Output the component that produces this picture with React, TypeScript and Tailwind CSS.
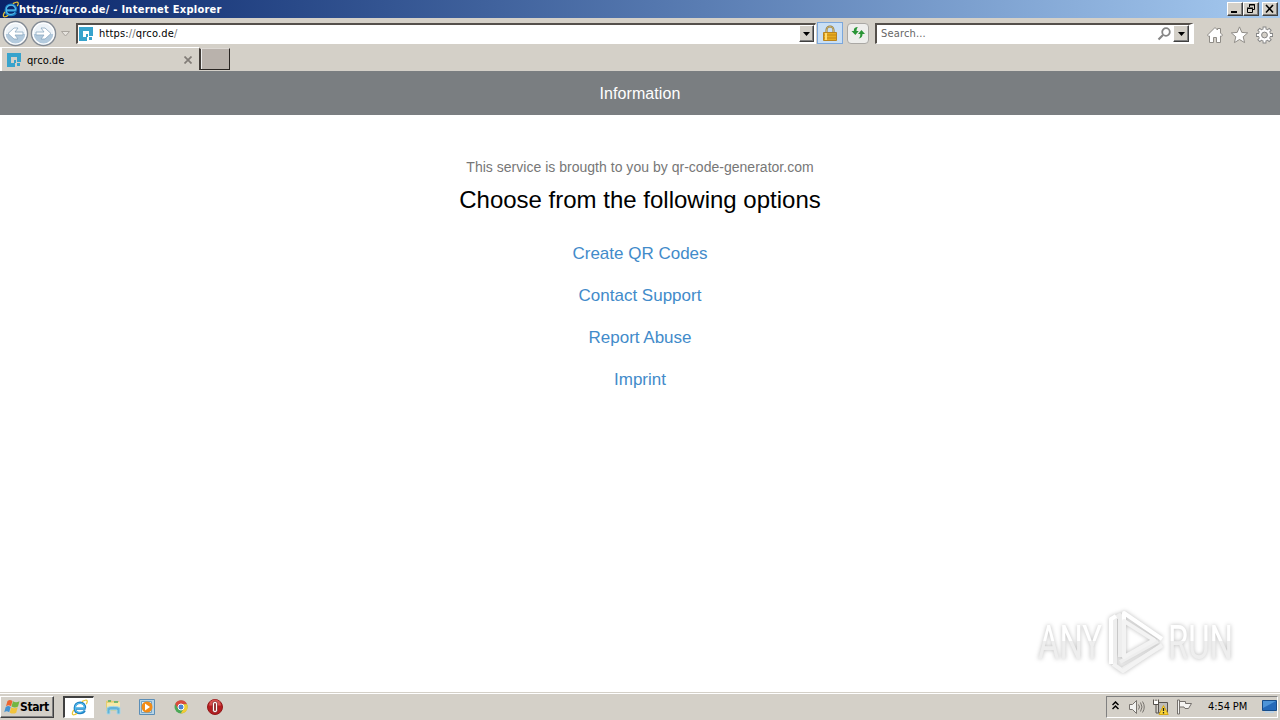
import React from 'react';

const links = ['Create QR Codes', 'Contact Support', 'Report Abuse', 'Imprint'];

const raised = 'border border-t-white border-l-white border-r-[#404040] border-b-[#404040] bg-[#d4d0c8] shadow-[inset_-1px_-1px_0_#808080]';

const IeLogo = ({ size }: { size: number }) => (
  <svg width={size} height={size} viewBox="0 0 18 18" fill="none" className="shrink-0">
    <path d="M5 10.200h10.500M14.600 12.200c-1 1.800-2.700 2.800-5 2.800C6.200 15 4 12.800 4 9.500S6.300 4 9.700 4s5.300 2.200 5.100 5.800" stroke="#1d7fc4" strokeWidth="2.500" />
    <path d="M5 9.600h9.500M13.800 12.200c-1 1.300-2.400 2-4.200 2C6.600 14.200 4.500 12.500 4.500 9.500S6.700 4.500 9.700 4.500s4.800 2 4.600 4.800" stroke="#55bdec" strokeWidth="1.200" />
    <path d="M3 11.500C1 14.500.8 17.200 3.200 16.700c1-.2 2.200-.9 3.200-1.700M11.500 2.800c2.700-1.600 5.200-2.100 5.600-.8.3 1-.2 2.200-1 3.400" stroke="#e8c535" strokeWidth="1.300" />
  </svg>
);

const SiteIcon = () => (
  <svg width="14" height="14" viewBox="0 0 14 14" className="shrink-0" fill="#38a3cc">
    <path d="M0 0h14v9h-4V4H4v6h4v4H0z" />
    <path d="M7 7h2v3H7zM10 10h3v3h-3z" />
  </svg>
);

const NavButton = ({ forward = false }: { forward?: boolean }) => (
  <svg width="27" height="27" viewBox="0 0 27 27" fill="none" className="shrink-0">
    <circle cx="13.5" cy="13.5" r="12" fill="#edf3f8" stroke="#858c95" strokeWidth="1.5" />
    <path d="M3 14a10.5 10.5 0 0 0 21 0z" fill="#b3cadd" />
    <circle cx="13.5" cy="13.5" r="10.5" stroke="#fff" strokeWidth="1.2" />
    <path
      d={forward ? 'M6 12h8l-3-4h4l6 5.5-6 5.5h-4l3-4H6z' : 'M21 12h-8l3-4h-4l-6 5.5 6 5.5h4l-3-4h8z'}
      fill="#fff"
      stroke="#8ba8c0"
      strokeWidth=".8"
    />
  </svg>
);

const DropButton = ({ width }: { width: number }) => (
  <div className={`flex h-[17px] shrink-0 items-center justify-center ${width > 15 ? 'w-4' : 'w-[15px]'} ${raised}`}>
    <svg width="7" height="4" viewBox="0 0 7 4"><path d="M0 0h7L3.5 4z" fill="#000" /></svg>
  </div>
);

const TitleBar = () => (
  <div className="flex h-[18px] items-center bg-linear-to-r from-[#0a246a] to-[#a6caf0] pl-0.5 pr-0.5">
    <IeLogo size={17} />
    <span className="whitespace-nowrap pt-px text-[11px] font-bold leading-[17px] tracking-[0.26px] text-white">
      https://qrco.de/ - Internet Explorer
    </span>
    <div className="ml-auto flex h-[14px]">
      <div className={`w-4 ${raised}`}>
        <svg width="14" height="12" viewBox="0 0 14 12"><path d="M3 8h6v2H3z" /></svg>
      </div>
      <div className={`w-4 ${raised}`}>
        <svg width="14" height="12" viewBox="0 0 14 12" fill="none" stroke="#000">
          <path d="M5.500 4V1.500h5v5H9M5 2h6M3.500 5.500h5v4h-5zM3 5h6" />
        </svg>
      </div>
      <div className={`ml-[3px] w-4 ${raised}`}>
        <svg width="14" height="12" viewBox="0 0 14 12" stroke="#000" strokeWidth="1.600"><path d="M3 2l7 7.500M10 2L3 9.500" /></svg>
      </div>
    </div>
  </div>
);

const Toolbar = () => (
  <div className="flex h-[29px] items-center bg-[#d4d0c8] pl-0.5 pt-px">
    <div className="flex h-[27px] w-[55px] items-center gap-px">
      <NavButton />
      <NavButton forward />
    </div>
    <svg className="ml-1 mt-0.5 shrink-0" width="9" height="6" viewBox="0 0 9 6"><path d="M.5.5h8l-4 4.500z" fill="#e6e3de" stroke="#aaa69f" /></svg>
    <div className="ml-[6px] flex h-[21px] w-[740px] items-center border-2 border-b border-r border-b-white border-l-[#55504b] border-r-white border-t-[#55504b] bg-white pl-px">
      <SiteIcon />
      <span className="ml-[6px] pt-0.5 text-[11px] tracking-[0.17px]">
        https:<span className="text-[#777]">//</span>qrco.de<span className="text-[#777]">/</span>
      </span>
      <div className="ml-auto mr-px"><DropButton width={15} /></div>
    </div>
    <div className="ml-px flex h-[22px] w-[26px] items-center justify-center border border-[#7ba7dc] bg-[#c9dff5]">
      <svg width="14" height="17" viewBox="0 0 14 17">
        <path d="M3.500 8V5a3.500 3.500 0 0 1 7 0v3" fill="none" stroke="#8b7440" strokeWidth="2" />
        <path d="M3.500 8V5a3.500 3.500 0 0 1 7 0v3" fill="none" stroke="#e0c875" strokeWidth=".8" />
        <path d="M.5 7.500h13v8H.5z" fill="#e8ad21" stroke="#b98420" />
        <path d="M1 10h12M1 13h12" stroke="#b5790e" strokeWidth=".7" />
        <path d="M3 8v7" stroke="#ffdc73" strokeWidth="2" />
      </svg>
    </div>
    <div className="ml-1 flex h-[21px] w-[22px] items-center justify-center rounded-sm border border-[#aaa8a4] bg-[#eeeeec]">
      <svg width="15" height="14" viewBox="0 0 15 14" fill="#299536">
        <path d="M7 1C4 1 2.800 2 2.800 5H.5l3.800 4 3.500-4H5.500C5.500 3 6 2 7 1zM7.500 12.500c3-.5 4-1.800 4-4.500H14l-3.500-4L7 8h2.300c0 2-.3 3.500-1.800 4.500z" />
      </svg>
    </div>
    <div className="ml-[6px] flex h-[21px] w-[319px] items-center border-2 border-b border-r-[5px] border-b-white border-l-[#55504b] border-r-white border-t-[#55504b] bg-white pl-1">
      <span className="pt-0.5 text-[11px] tracking-[0.16px] text-[#666]">Search...</span>
      <svg className="ml-auto mr-0.5" width="14" height="14" viewBox="0 0 14 14" fill="none" stroke="#858585" strokeWidth="1.800">
        <circle cx="9" cy="5" r="3.800" />
        <path d="M6 8l-4.500 4.500" strokeWidth="2.200" />
      </svg>
      <DropButton width={16} />
    </div>
    <div className="ml-3 flex gap-[7px] pt-[3px]">
      <svg width="18" height="18" viewBox="0 0 18 18" fill="#fff" stroke="#8f8c87" strokeWidth="1">
        <path d="M1.500 9L9 1.500l2.500 2.500V2.500h3V7l2 2-1.200 1.500L14.500 10v6.500h-4v-5h-3v5h-4V10l-.8.5z" />
      </svg>
      <svg width="18" height="18" viewBox="0 0 18 18" fill="#fff" stroke="#8f8c87" strokeWidth="1">
        <path d="M8.500.9l2.300 5.500 5.900.5-4.500 3.900 1.400 5.800-5.100-3.100-5.100 3.100 1.400-5.800L.3 6.900l5.900-.5z" />
      </svg>
      <svg width="18" height="18" viewBox="0 0 18 18" fill="none">
        <g stroke="#858585" strokeWidth="3.800">
          <path d="M8.500.5v17M0 9h17M2.500 3l12 12M14.500 3l-12 12" />
        </g>
        <circle cx="8.500" cy="9" r="6.500" fill="#858585" />
        <path d="M8.500 1.400v15.200M.9 9h15.200M3.200 3.700l10.600 10.600M13.800 3.700L3.200 14.300" stroke="#fff" strokeWidth="2" />
        <circle cx="8.500" cy="9" r="5.700" fill="#fff" />
        <circle cx="8.500" cy="9" r="2.900" fill="#d4d0c8" stroke="#858585" />
      </svg>
    </div>
  </div>
);

const Tabs = () => (
  <div className="flex h-6 bg-[#d4d0c8]">
    <div className="flex h-6 w-[199px] items-center border-l-2 border-t border-white pl-[5px] pt-px">
      <SiteIcon />
      <span className="ml-1.5 pt-0.5 text-[11px] tracking-[0.06px]">qrco.de</span>
      <svg className="ml-auto mr-[7px]" width="8" height="8" viewBox="0 0 8 8" stroke="#817c77" strokeWidth="1.700"><path d="M.5.5l7 7M7.500.5l-7 7" /></svg>
    </div>
    <div className="mt-px h-[22px] w-[31px] border-b border-l-2 border-r border-t border-b-[#292522] border-l-[#403b37] border-r-[#292522] border-t-[#ddd9d4] bg-[#b9b2ac] shadow-[inset_1px_0_0_#eee]" />
  </div>
);

const Page = () => (
  <div className="flex flex-1 flex-col items-center bg-white font-['Liberation_Sans',sans-serif]">
    <header className="flex h-11 w-full items-center justify-center bg-[#7a7e81] pt-0.5 text-[16px] text-white">
      <span className="tracking-[0.08px]">Information</span>
    </header>
    <p className="mt-[42px] text-[14px] leading-5 tracking-[0.02px] text-[#777]">This service is brougth to you by qr-code-generator.com</p>
    <h1 className="mt-2 text-[24px] leading-[30px] text-black">Choose from the following options</h1>
    <nav className="mt-[18px] flex flex-col items-center">
      {links.map((link) => (
        <a key={link} href="#" className="flex h-[42px] items-center text-[17px] text-[#428bca]">{link}</a>
      ))}
    </nav>
  </div>
);

const Watermark = () => (
  <svg className="absolute left-[1030px] top-[602px] overflow-visible drop-shadow-[0_0_2px_#bcbcbc]" width="220" height="76" viewBox="0 0 220 76">
    <defs>
      <linearGradient id="shine" gradientUnits="userSpaceOnUse" x1="0" y1="0" x2="0" y2="76">
        <stop offset=".51" stopColor="#fff" />
        <stop offset=".51" stopColor="#eee" />
      </linearGradient>
    </defs>
    <g fill="url(#shine)" fontFamily="Liberation Sans Narrow, Roboto, sans-serif" fontSize="49">
      <text x="8" y="57" textLength="64" lengthAdjust="spacingAndGlyphs">ANY</text>
      <text x="138" y="57" textLength="65" lengthAdjust="spacingAndGlyphs">RUN</text>
    </g>
    <g fill="none" strokeWidth="4" strokeLinejoin="round">
      <path d="M85 62V16l5-3v42M90 60l38-21M93 67l39-23" stroke="#eee" />
      <path d="M81 62V17l5-3" stroke="#fff" />
      <path d="M94 54V11l38 26" stroke="#fff" />
      <path d="M94 19l30 19-30 17zM83 62l10 7 39-26" stroke="#f3f3f3" />
    </g>
  </svg>
);

const Taskbar = () => (
  <div className="flex h-7 items-center border-t border-[#d4d0c8] bg-[#d4d0c8] pr-0.5 shadow-[inset_0_1px_0_#fff]">
    <button className={`flex h-[22px] w-[54px] items-center pl-[3px] ${raised}`}>
      <svg width="16" height="16" viewBox="0 0 16 16" className="shrink-0">
        <path d="M3.500 2c2-1.500 3-1.300 5 0L7 7.200c-2-1.200-3-1.200-5 0z" fill="#ed6530" />
        <path d="M9 2.300c2 1.200 4 1.200 6.500 0L14 7.600c-2 1.200-4 1.200-6.500 0z" fill="#73b642" />
        <path d="M1.700 7.900c2-1.200 3-1.200 5 0l-1.500 5.300c-2-1.200-3-1.200-5 0z" fill="#4393d3" />
        <path d="M7.200 8.300c2 1.200 4 1.200 6.500 0l-1.500 5.400c-2 1.200-4 1.200-6.500 0z" fill="#f2c43c" />
      </svg>
      <span className="text-[12px] font-bold leading-5 tracking-[-0.4px]">Start</span>
    </button>
    <div className="ml-[9px] flex h-[22px] w-[31px] items-center justify-center border border-l-2 border-t-2 border-b-white border-l-[#404040] border-r-white border-t-[#404040] bg-white">
      <IeLogo size={17} />
    </div>
    <svg className="ml-[11px]" width="17" height="17" viewBox="0 0 17 17">
      <path d="M1 3l5-1 1 1h7v10H1z" fill="#e4cd70" />
      <path d="M2 5l13-1v8H2z" fill="#f6e9a8" />
      <path d="M3 3h3M9 4h4" stroke="#4dad69" strokeWidth="1.500" />
      <path d="M2 9.500C5 8 12 8 15 9.500V16h-3v-4H5v4H2z" fill="#61b3d7" stroke="#a8d6e6" />
    </svg>
    <svg className="ml-[17px]" width="16" height="16" viewBox="0 0 16 16">
      <path d="M.5.5h15v15H.5z" fill="#b8d4e6" stroke="#5b8eb7" />
      <path d="M2.500 2.500h10v11h-10z" fill="#e2edf2" stroke="#73a3c5" />
      <circle cx="8" cy="8" r="5.500" fill="#f28b16" />
      <path d="M6 4.500l5 3.500-5 3.500z" fill="#fff" />
    </svg>
    <svg className="ml-[19px]" width="14" height="14" viewBox="0 0 14 14">
      <circle cx="7" cy="7" r="6.500" fill="#4ca857" />
      <path d="M1.200 4A6.500 6.500 0 0 1 13 4.200H7L4.300 9z" fill="#d94a3d" />
      <path d="M7 4.200h6A6.500 6.500 0 0 1 6.700 13.500L10 8z" fill="#f3cb35" />
      <circle cx="7" cy="7" r="3" fill="#4b83d2" stroke="#fff" />
    </svg>
    <svg className="ml-[19px]" width="16" height="16" viewBox="0 0 16 16">
      <circle cx="8" cy="8" r="7.500" fill="#b51d20" stroke="#91191a" />
      <path d="M2 6.500a6 6 0 0 1 12 0" fill="#d75150" />
      <rect x="5.500" y="2.500" width="5" height="11" rx="2.300" fill="#fff" stroke="#6e0b0d" strokeWidth=".6" />
      <rect x="7.100" y="4" width="1.800" height="8" rx=".9" fill="#8e2323" />
    </svg>
    <div className="ml-auto flex h-[22px] w-[172px] items-center border border-b-white border-l-[#808080] border-r-white border-t-[#808080] pl-[5px]">
      <svg className="mb-0.5" width="7" height="9" viewBox="0 0 7 9" fill="none" stroke="#000" strokeWidth="1.500"><path d="M.5 4l3-3 3 3M.5 8l3-3 3 3" /></svg>
      <svg className="ml-[9px]" width="17" height="16" viewBox="0 0 17 16" fill="none" stroke="#77736e">
        <path d="M1.500 5.500h3l4-4v13l-4-4h-3z" fill="#f2f2f0" />
        <path d="M10.500 5.500q2 2.500 0 5M12.500 3.500q3 4.500 0 9M14.500 2.500q3.500 5.500 0 11" />
      </svg>
      <svg className="ml-[7px]" width="17" height="16" viewBox="0 0 17 16">
        <path d="M6.500 3.500h9v10h-9z" fill="#bebcb8" stroke="#57534f" />
        <path d="M1.500.5v5h5v-5M4 .5v3M4 5.500v8.500h3" fill="none" stroke="#55504c" />
        <path d="M2 2h4v3H2z" fill="#fff" />
        <path d="M11.500 6.500L7 15.500h9.200z" fill="#f9d537" stroke="#d7a814" />
        <path d="M11.500 9v3M11.500 13v1.500" stroke="#222" strokeWidth="1.300" />
      </svg>
      <svg className="ml-[7px]" width="17" height="16" viewBox="0 0 17 16" fill="#f5f4f2" stroke="#75716d">
        <path d="M1.500 1v14h2V1zM3.500 2.500h6v2h6l-3 5H9l-1-1.500H3.500z" />
      </svg>
      <span className="ml-[15px] whitespace-nowrap pt-0.5 text-[11px] tracking-[-0.1px]">4:54 PM</span>
      <svg className="ml-auto" width="15" height="13" viewBox="0 0 15 13">
        <path d="M.5.5h14v10H.5z" fill="#2469b9" stroke="#174c89" />
        <path d="M1 1h13L1 8z" fill="#4d94d8" />
        <path d="M3 12h9" stroke="#bcd1e3" strokeWidth="2" />
      </svg>
    </div>
  </div>
);

export default function App() {
  return (
    <div className="relative flex h-[720px] w-[1280px] flex-col overflow-hidden bg-[#d4d0c8] font-['DejaVu_Sans_Condensed','DejaVu_Sans',sans-serif] text-black">
      <TitleBar />
      <Toolbar />
      <Tabs />
      <Page />
      <Watermark />
      <Taskbar />
    </div>
  );
}
